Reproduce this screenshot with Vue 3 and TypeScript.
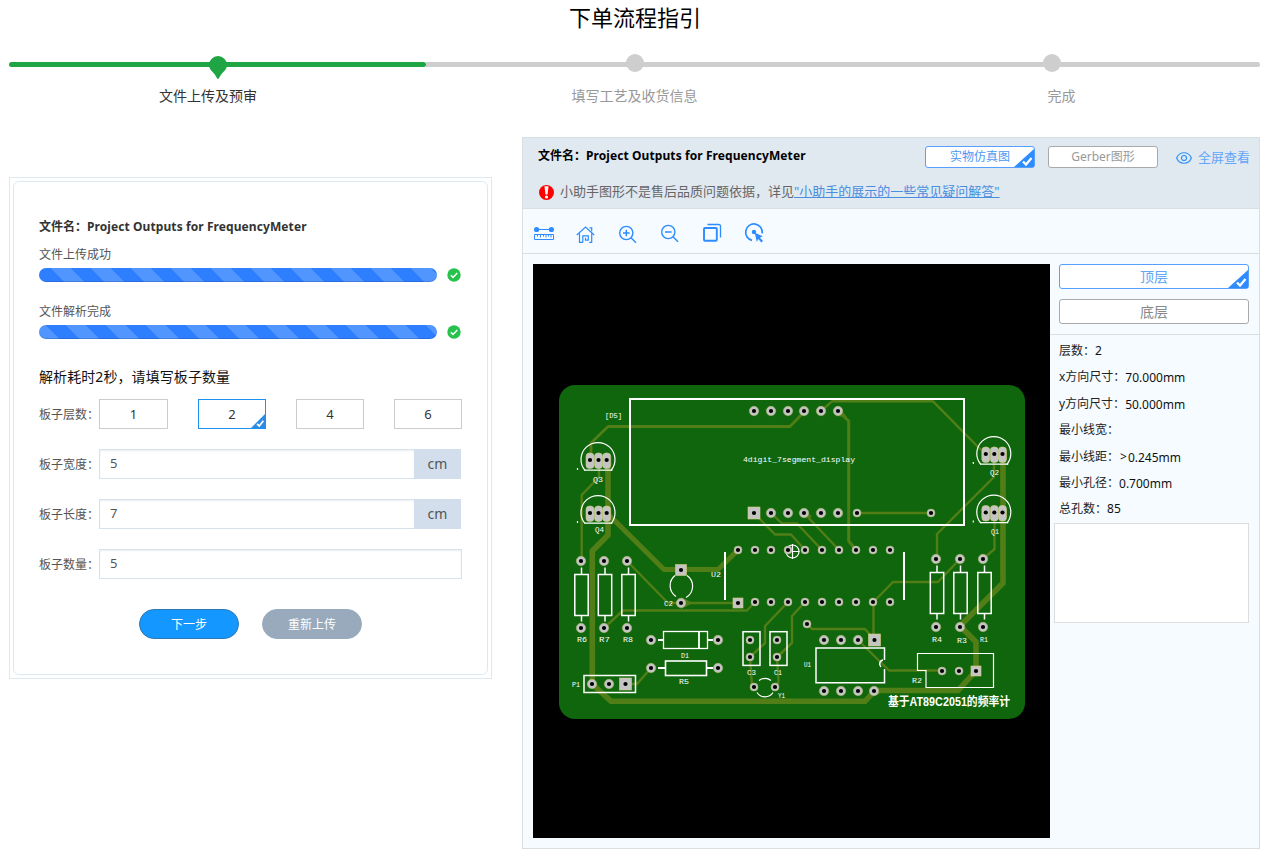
<script setup lang="ts">
import { ref } from 'vue'

interface Pad { x: number; y: number; r?: number }
interface Label { x: number; y: number; t: string; w: number }

const fileName = 'Project Outputs for FrequencyMeter'
const layers = [1, 2, 4, 6]
const layer = ref(2)
const boardWidth = ref('5')
const boardLength = ref('7')
const quantity = ref('5')

const info = [
  { label: '层数：', value: '2' },
  { label: 'x方向尺寸：', value: '70.000mm', low: true },
  { label: 'y方向尺寸：', value: '50.000mm', low: true },
  { label: '最小线宽：', value: '' },
  { label: '最小线距：', mark: '>', value: '0.245mm', low: true },
  { label: '最小孔径：', value: '0.700mm', low: true },
  { label: '总孔数：', value: '85' }
]

const row = (xs: number[], y: number, r = 4.7): Pad[] => xs.map(x => ({ x, y, r }))
const icXs = [755, 771, 788, 805, 822, 839, 856, 873, 890]

const pads: Pad[] = [
  ...row([754, 771, 788, 804, 821, 838], 411),
  ...row([771, 788, 804, 821, 838], 513),
  ...row([857, 931], 513, 4),
  ...row([738, ...icXs], 550, 4),
  ...row(icXs, 602, 4),
  ...row([581, 604, 627], 561),
  ...row([581, 604, 627], 628),
  ...row([936, 960, 983], 559),
  ...row([936, 960, 983], 627),
  ...row([651, 718], 640),
  ...row([651, 718], 668),
  ...row([592, 609], 684),
  ...row([681], 603),
  ...row([750, 777], 640, 4),
  ...row([750, 777], 657, 4),
  ...row([754, 775], 687, 4),
  ...row([824, 841, 858], 640),
  ...row([824, 841, 858, 874], 691),
  ...row([807], 624, 4),
  ...row([942, 959], 671, 4)
]
const squares = [
  { x: 754, y: 513, s: 12 }, { x: 738, y: 603, s: 10 }, { x: 681, y: 570, s: 11 },
  { x: 625.5, y: 684, s: 12 }, { x: 874.5, y: 640, s: 12 }, { x: 976, y: 671, s: 10 }
]
const transistors = [
  { x: 597.5, y: 460 }, { x: 597.5, y: 513 }, { x: 993.3, y: 454 }, { x: 993.3, y: 512.5 }
]
const resistors = [
  { x: 581.5, y: 574.5 }, { x: 605, y: 574.5 }, { x: 628.5, y: 574.5 },
  { x: 937, y: 572.5 }, { x: 960.5, y: 572.5 }, { x: 984.5, y: 572.5 }
]
const labels: Label[] = [
  { x: 605, y: 418, t: '[D5]', w: 17 }, { x: 593, y: 482, t: 'Q3', w: 10 }, { x: 595, y: 532, t: 'Q4', w: 9 },
  { x: 990, y: 475, t: 'Q2', w: 9 }, { x: 991, y: 534, t: 'Q1', w: 8 },
  { x: 577, y: 642, t: 'R6', w: 10 }, { x: 599, y: 642, t: 'R7', w: 11 }, { x: 623, y: 642, t: 'R8', w: 10 },
  { x: 932, y: 642, t: 'R4', w: 10 }, { x: 957, y: 643, t: 'R3', w: 10 }, { x: 980, y: 642, t: 'R1', w: 8 },
  { x: 681, y: 657.5, t: 'D1', w: 8 }, { x: 679, y: 684, t: 'R5', w: 10 }, { x: 572, y: 687, t: 'P1', w: 8 },
  { x: 664, y: 606, t: 'C2', w: 9 }, { x: 711, y: 577, t: 'U2', w: 10 }, { x: 747, y: 675, t: 'C3', w: 9 },
  { x: 774, y: 675, t: 'C1', w: 8 }, { x: 778, y: 698, t: 'Y1', w: 7 }, { x: 804, y: 667, t: 'U1', w: 7 },
  { x: 912, y: 683, t: 'R2', w: 10 }
]
</script>

<template>
  <div class="page">
    <h1>下单流程指引</h1>

    <div class="steps">
      <div class="step done">
        <div class="line"></div>
        <svg class="pin" width="18" height="24" viewBox="0 0 18 24"><path d="M9 0a9 9 0 0 1 9 9c0 3.600-2.500 6-5 8.500-1.800 2-3 5.500-4 5.500s-2.200-3.500-4-5.500C2.500 15 0 12.600 0 9a9 9 0 0 1 9-9z" fill="#1fa544" /></svg>
        <span class="cap first">文件上传及预审</span>
      </div>
      <div class="step"><div class="line"></div><i class="dot"></i><span class="cap">填写工艺及收货信息</span></div>
      <div class="step last"><div class="line"></div><i class="dot"></i><span class="cap third">完成</span></div>
    </div>

    <main>
      <section class="card">
        <div class="inner">
          <div class="name">文件名：<span class="latin">{{ fileName }}</span></div>
          <div class="state">文件上传成功</div>
          <div class="prog">
            <div class="bar"></div>
            <svg width="14" height="14" viewBox="0 0 14 14"><circle cx="7" cy="7" r="6.700" fill="#27c24c" /><path d="M3.800 7.200l2.200 2.200 4.300-4.400" fill="none" stroke="#fff" stroke-width="1.500" /></svg>
          </div>
          <div class="state second">文件解析完成</div>
          <div class="prog">
            <div class="bar alt"></div>
            <svg width="14" height="14" viewBox="0 0 14 14"><circle cx="7" cy="7" r="6.700" fill="#27c24c" /><path d="M3.800 7.200l2.200 2.200 4.300-4.400" fill="none" stroke="#fff" stroke-width="1.500" /></svg>
          </div>
          <div class="tip">解析耗时2秒，请填写板子数量</div>
          <div class="field">
            <label>板子层数：</label>
            <div class="opts">
              <div v-for="n in layers" :key="n" class="opt" :class="{ on: n === layer }" @click="layer = n">
                {{ n }}
                <svg v-if="n === layer" class="tick" width="14" height="14" viewBox="0 0 15 15"><path d="M15 0v15H0z" fill="#2f8ce6" /><path d="M6.500 10.500l2.300 2.300 4.500-5.500" fill="none" stroke="#fff" stroke-width="1.800" /></svg>
              </div>
            </div>
          </div>
          <div class="field"><label>板子宽度：</label><input v-model="boardWidth" class="short" /><span class="unit">cm</span></div>
          <div class="field"><label>板子长度：</label><input v-model="boardLength" class="short" /><span class="unit">cm</span></div>
          <div class="field"><label>板子数量：</label><input v-model="quantity" /></div>
          <div class="actions"><button class="next">下一步</button><button class="again">重新上传</button></div>
        </div>
      </section>

      <section class="viewer">
        <header>
          <div class="top">
            <div class="vname">文件名：<span class="latin">{{ fileName }}</span></div>
            <div class="tab on">实物仿真图
              <svg class="tick" width="20" height="18" viewBox="0 0 20 18"><path d="M20 0v18H0z" fill="#2d8cff" /><path d="M9 12.500l3 3 5.500-6.500" fill="none" stroke="#fff" stroke-width="2.300" /></svg>
            </div>
            <div class="tab">Gerber图形</div>
            <div class="full">
              <svg width="16" height="12" viewBox="0 0 16 12" fill="none" stroke="#2f93f8" stroke-width="1.200"><path d="M.6 6C3.500-1 12.500-1 15.400 6 12.500 13 3.500 13 .6 6z" /><circle cx="8" cy="6" r="2.500" /></svg>
              <span>全屏查看</span>
            </div>
          </div>
          <div class="warn">
            <svg width="15" height="15" viewBox="0 0 15 15"><circle cx="7.500" cy="7.500" r="7.500" fill="#f00" /><path d="M5.500 1.300h4L8.500 9.500h-2z" fill="#fff" /><circle cx="7.500" cy="12" r="1.600" fill="#fff" /></svg>
            <span>小助手图形不是售后品质问题依据，详见<a>"小助手的展示的一些常见疑问解答"</a></span>
          </div>
        </header>

        <div class="tools">
          <svg viewBox="0 0 20 20"><path d="M3 6.500h14" stroke-width="1" /><circle class="solid" cx="2.600" cy="6.500" r="2.600" /><circle class="solid" cx="17.400" cy="6.500" r="2.600" /><path d="M.5 11.500h19v5H.5zM3.500 11.500v2M6.500 11.500v3M9.500 11.500v2M12 11.500v3M14.500 11.500v2M17 11.500v3" stroke-width="1" /></svg>
          <svg viewBox="0 0 20 20"><path d="M.8 12L9.500 4l8.700 8M3.500 10.500v8.800H7M15.700 10.500v8.800h-2.500M6.800 19.300v-6.500h5.500v4.400H9.500v-2.400M13.500 4.800h2.200v3.500" stroke-width="1.200" /></svg>
          <svg viewBox="0 0 20 20"><circle cx="8.300" cy="10" r="6.600" /><path d="M13 14.800l5 5M5 10h6.600M8.300 6.700v6.600" /></svg>
          <svg viewBox="0 0 20 20"><circle cx="8.300" cy="9" r="6.600" /><path d="M13 13.800l5 5M5 9h6.600" /></svg>
          <svg viewBox="0 0 20 20"><rect x="2" y="5" width="12.800" height="12.800" rx="1" stroke-width="1.900" /><path d="M5.500 1.500h11.200a1.800 1.800 0 0 1 1.800 1.800V14.500" stroke-width="1.300" /></svg>
          <svg viewBox="0 0 20 20"><path d="M8 17.300a8.300 8.300 0 1 1 10.200-7" stroke-width="1.700" /><circle class="solid" cx="10" cy="9" r="2.200" /><path class="solid" d="M10.800 9.800l7.900 3.400-2.800 1.500 3.100 3.100-1.600 1.600-3.200-3.300-1.400 2.800z" /></svg>
        </div>

        <div class="content">
          <svg class="canvas" width="517" height="574" viewBox="533 264 517 574">
            <rect x="533" y="264" width="517" height="574" fill="#000" />
            <rect x="559" y="385" width="466" height="334" rx="16" fill="#10660c" />
            <g fill="none" stroke="#527e17" stroke-width="2.400" stroke-linejoin="round">
              <path d="M591 455V443L608 426.500H790L804 412" stroke-width="2.800" />
              <path d="M821 411L832 401.300H933L981 450" />
              <path d="M838 411L848.700 421V541L856 550" stroke-width="3" />
              <path d="M857 513H931M627 561L668 603H738M604 628L623 610.500H747L755 602" />
              <path d="M599 462V477L581.700 495V561" />
              <path d="M754 513L775 534.500H791L805 550M771 513L782 523.500H797L822 550M804 513L839 550" />
              <path d="M994 460V477L937 534V559M994.500 512V549L983 559" />
              <path d="M788 602L765 626V643L750 657 752 686M805 602L792 616V643L777 657 778.500 682 775 687" />
              <path d="M873.500 640V602L893 582H938L960 559M807 624L812 629H865L875 640M858 640L889 670.500H942M626 684H637L651 668" />
              <path d="M608 464V535L592.300 551V684L611 701.300H865L875 690.500H958L976 671V642L960 626 1003 583V456" stroke-width="5.600" stroke-linejoin="miter" />
              <path d="M608 514L664 569.500H718L738 550" stroke-width="5" />
            </g>
            <g fill="#527e17"><path d="M838 406l9 11-11-1zM804 508l8 9-9 1zM681 597l12 6-12 6zM874 686l12 5-12 5z" /></g>

            <g fill="none" stroke="#fff" stroke-width="1.200">
              <rect x="630" y="399" width="334" height="126" stroke-width="2" />
              <path d="M725 552V600M904 552V600" stroke-width="2" />
              <g v-for="(t, i) in transistors" :key="'t' + i">
                <path :d="`M${t.x - 12.5} ${t.y + 10.500}A17 17 0 1 1 ${t.x + 13.5} ${t.y + 10.500}`" />
                <path :d="`M${t.x - 13} ${t.y + 10.200}h28M${t.x - 20} ${t.y + 8}v2`" />
              </g>
              <g v-for="(r, i) in resistors" :key="'r' + i">
                <rect :x="r.x - 6.700" :y="r.y" width="13.400" height="41" stroke-width="1.500" />
                <path :d="`M${r.x} ${r.y - 7}v7M${r.x} ${r.y + 41}v6`" stroke-width="1.500" />
              </g>
              <rect x="663.500" y="631.500" width="44" height="17" stroke-width="1.300" />
              <path d="M699 632V648M658 640H663M708 640H713M658 668H665M707 668H713" stroke-width="1.800" />
              <rect x="665.500" y="661" width="41" height="14.500" stroke-width="1.600" />
              <rect x="584" y="675.500" width="51.500" height="17" stroke-width="1.500" />
              <rect x="743" y="631.700" width="17" height="33.700" stroke-width="1.500" />
              <rect x="770" y="631.700" width="17" height="33.700" stroke-width="1.500" />
              <path d="M675 575.500A13 13 0 0 0 676 596.500M687 575.500A13 13 0 0 1 686 597.500M759 680.500A9.500 9.500 0 0 1 771 680.500M757 692.500A9.500 9.500 0 0 0 773 692.500" />
              <path d="M884.500 660V648H816V682.700H884.500V669M883 660c-4 1-4 5-2 7" stroke-width="1.500" />
              <path d="M917.500 653.500H993.500V687.500H926V670.500H917.500z" />
              <circle cx="792.500" cy="551.500" r="6.500" /><path d="M785 551.500H799.500M792.500 544V559" />
            </g>

            <g v-for="(p, i) in pads" :key="'p' + i">
              <circle :cx="p.x" :cy="p.y" :r="p.r" fill="#c4c4c4" stroke="#b5bb72" stroke-width=".5" />
              <circle :cx="p.x" :cy="p.y" r="2.100" fill="#000" />
            </g>
            <g v-for="(s, i) in squares" :key="'s' + i">
              <rect :x="s.x - s.s / 2" :y="s.y - s.s / 2" :width="s.s" :height="s.s" fill="#c4c4c4" stroke="#d0d078" stroke-width=".6" />
              <circle :cx="s.x" :cy="s.y" r="2.100" fill="#000" />
            </g>
            <g v-for="(t, i) in transistors" :key="'tp' + i">
              <g v-for="d in [-7.500, 1, 9.200]" :key="d">
                <rect :x="t.x + d - 4" :y="t.y - 7" width="8" height="15.500" rx="3.500" fill="#c4c4c4" stroke="#d0d078" stroke-width=".6" />
                <circle :cx="t.x + d" :cy="t.y" r="2.100" fill="#000" />
              </g>
            </g>
            <g class="silk">
              <text v-for="l in labels" :key="l.t" :x="l.x" :y="l.y" :textLength="l.w" lengthAdjust="spacingAndGlyphs">{{ l.t }}</text>
              <text x="743" y="462" textLength="112" lengthAdjust="spacingAndGlyphs" class="disp">4digit_7segment_display</text>
              <text x="888" y="706" textLength="122" lengthAdjust="spacingAndGlyphs" class="title">基于AT89C2051的频率计</text>
            </g>
          </svg>

          <aside>
            <div class="sides">
              <div class="side on">顶层
                <svg class="tick" width="20" height="18" viewBox="0 0 20 18"><path d="M20 0v18H0z" fill="#2d8cff" /><path d="M9 12.500l3 3 5.500-6.500" fill="none" stroke="#fff" stroke-width="2.300" /></svg>
              </div>
              <div class="side">底层</div>
            </div>
            <dl>
              <div v-for="r in info" :key="r.label" class="irow" :class="{ low: r.low }">
                <dt>{{ r.label }}</dt><dd v-if="r.mark" class="mark">{{ r.mark }}</dd><dd>{{ r.value }}</dd>
              </div>
            </dl>
            <div class="note"></div>
          </aside>
        </div>
      </section>
    </main>
  </div>
</template>

<style>
body { margin: 0; background: #fff; overflow: hidden; }
</style>

<style scoped>
* { box-sizing: border-box; }
.page { width: 1263px; height: 849px; overflow: hidden; font: 12px/20px "Noto Sans", "Noto Sans CJK SC", sans-serif; color: #333; }
h1 { margin: 0 0 0 9px; width: 1252px; height: 54px; padding-top: 2px; text-align: center; font-size: 22px; line-height: 30px; font-weight: 400; color: #000; }
.steps { display: flex; width: 1251px; height: 83px; margin-left: 9px; }
.step { position: relative; width: 417px; display: flex; flex-direction: column; align-items: center; color: #999; font-size: 14px; }
.line { position: absolute; left: 0; right: 0; top: 8px; height: 5px; background: #cecece; }
.done { color: #333; }
.done .line { background: #1fa544; border-radius: 3px; }
.last .line { border-radius: 0 3px 3px 0; }
.dot { position: relative; width: 18px; height: 18px; border-radius: 50%; background: #cecece; margin-bottom: 14px; }
.pin { position: relative; margin: 2px 0 6px; }
.cap.first { margin-right: 19px; }
.cap.third { margin-left: 20px; }
main { display: flex; align-items: flex-start; gap: 30px; padding-left: 9px; }
.card { width: 483px; height: 502px; margin-top: 40px; padding: 3px; border: 1px solid #dce9f1; }
.inner { height: 494px; padding: 35px 25px 0; border: 1px solid #dce9f1; border-radius: 6px; }
.name { font-weight: 700; }
.latin { letter-spacing: .085px; }
.state { margin-top: 8px; color: #555; }
.state.second { margin-top: 20px; }
.prog { display: flex; align-items: center; gap: 10px; height: 14px; margin-top: 3px; }
.bar { width: 398px; height: 14px; border-radius: 7px; background-color: #2e7fff; background-image: linear-gradient(45deg, rgba(255,255,255,.17) 25%, transparent 25%, transparent 50%, rgba(255,255,255,.17) 50%, rgba(255,255,255,.17) 75%, transparent 75%); background-size: 40px 40px; background-position: 12px 0; box-shadow: inset 0 -1px 0 rgba(0,0,0,.15); }
.bar.alt { background-position: 27px 0; }
.tip { margin-top: 28px; margin-bottom: 12px; font-size: 14px; letter-spacing: .08px; color: #111; }
.field { display: flex; width: 423px; height: 30px; margin-bottom: 20px; }
.field label { width: 60px; line-height: 32px; color: #555; white-space: nowrap; }
.opts { display: grid; grid-template-columns: 69px 68px 68px 68px; gap: 30px; }
.opt { position: relative; height: 30px; border: 1px solid #ccc; text-align: center; line-height: 28px; font-size: 13px; }
.opt.on { border-color: #1e90f0; }
.tick { position: absolute; right: 0; bottom: 0; }
input { width: 363px; height: 30px; padding: 0 10px 2px; border: 1px solid #d7e2ea; border-radius: 0; outline: 0; font: 13px "Noto Sans", sans-serif; color: #555; box-shadow: inset 0 1px 2px rgba(0,0,0,.07); }
.short { width: 315px; border-right: 0; }
.unit { width: 47px; background: #d2deeb; text-align: center; font-size: 14px; line-height: 30px; color: #555; }
.actions { display: flex; gap: 23px; padding: 10px 0 0 100px; }
button { width: 100px; height: 30px; padding: 0 0 2px; border-radius: 15px; border: 1px solid #98aabc; background: #98aabc; color: #fff; font: 12px "Noto Sans CJK SC", sans-serif; }
.next { background: #1497ff; border-color: #2c78b4; }
.viewer { width: 738px; height: 712px; border: 1px solid #d9dee1; background: #f5fbff; }
header { height: 71px; background: #e0e8f0; border-bottom: 1px solid #d9dee1; padding: 8px 9px 0 15px; }
.top { display: flex; height: 22px; }
.vname { width: 387px; color: #000; font-weight: 700; line-height: 19px; }
.tab { position: relative; width: 110px; height: 22px; margin-right: 13px; border: 1px solid #aaa; border-radius: 3px; background: #fff; color: #999; text-align: center; line-height: 20px; }
.tab.on { border-color: #559fff; color: #4c98f5; }
.full { display: flex; align-items: center; gap: 6px; margin-left: 5px; color: #62a6f8; font-size: 13px; white-space: nowrap; padding-top: 1px; }
.full span { margin-top: -2px; }
.warn { display: flex; align-items: center; gap: 6px; margin: 13px 0 0 1px; color: #666; font-size: 13px; white-space: nowrap; height: 20px; }
.warn svg { margin-top: 3px; }
.warn a { color: #4a8ee0; text-decoration: underline; }
.tools { display: flex; gap: 22px; height: 45px; padding: 14px 0 0 11px; border-bottom: 1px solid #d9dee1; }
.tools svg { width: 20px; height: 20px; overflow: visible; fill: none; stroke: #2d8cff; stroke-width: 1.400; }
.tools .solid { fill: #2d8cff; stroke: none; }
.content { display: flex; padding: 10px 0 0 10px; }
.canvas { display: block; flex: none; }
.silk text { fill: #fff; font: 7px "Liberation Mono", monospace; }
.silk .disp { font-size: 8px; }
.silk .title { font: bold 12px "Liberation Sans", "Noto Sans CJK SC", sans-serif; }
aside { width: 209px; }
.sides { display: flex; flex-direction: column; gap: 10px; height: 71px; padding-left: 9px; border-bottom: 1px solid #d9dee1; }
.side { position: relative; width: 190px; height: 25px; border: 1px solid #aaa; border-radius: 3px; background: #fff; color: #888; text-align: center; font-size: 14px; line-height: 24px; }
.side.on { border-color: #559fff; color: #62a6f8; }
dl { height: 188px; margin: 0; padding: 6px 0 0 9px; color: #222; }
.irow { display: flex; height: 26.400px; }
dd { margin: 0; color: #111; }
.low dd { padding-top: 1px; }
.low dd.mark { padding: 0 1px 0 1px; }
.note { width: 195px; height: 100px; margin-left: 4px; border: 1px solid #ddd; background: #fff; }
</style>
